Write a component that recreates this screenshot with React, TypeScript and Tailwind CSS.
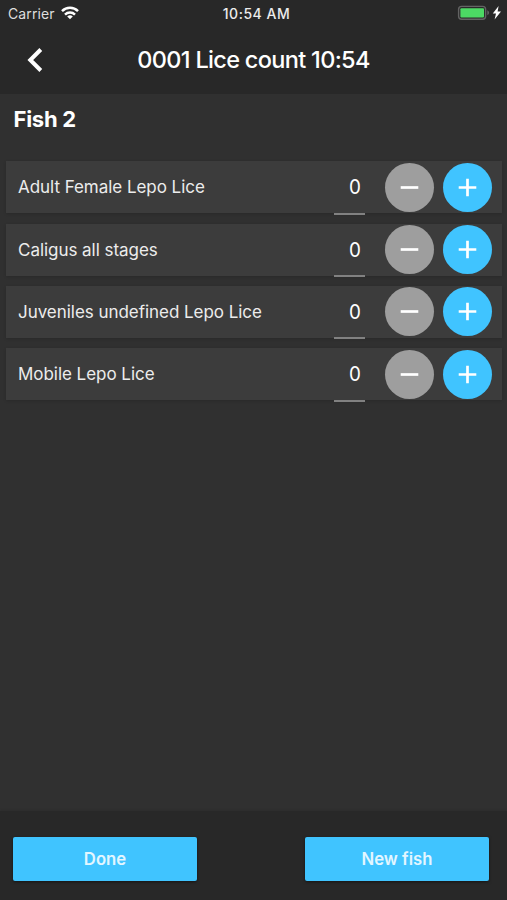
import React from "react";

const counts = [
  "Adult Female Lepo Lice",
  "Caligus all stages",
  "Juveniles undefined Lepo Lice",
  "Mobile Lepo Lice",
];

function StatusBar() {
  return (
    <div className="grid h-[27px] grid-cols-3 items-center pl-2 pr-[5px]">
      <div className="flex items-center gap-[6px]">
        <span className="text-[14px] tracking-[0.1px] text-[#dedede]">Carrier</span>
        <svg className="-mt-px" width="18" height="14" viewBox="0 0 18 14" fill="none" stroke="#fff" strokeWidth="2.5">
          <path d="M1 5.1a11.5 11.5 0 0 1 16 0" />
          <path d="M4 8.6a7.2 7.2 0 0 1 10 0" />
          <path d="M9 13.3 6.2 10.5a4 4 0 0 1 5.6 0Z" fill="#fff" stroke="none" />
        </svg>
      </div>
      <span className="whitespace-nowrap pl-[3px] text-center text-[14px] font-medium tracking-[0.5px] text-[#ececec]">10:54 AM</span>
      <div className="flex items-center justify-end">
        <svg className="-mt-px" width="46" height="16" viewBox="0 0 46 16">
          <rect x="2.6" y="1.4" width="27" height="12.8" rx="3" fill="none" stroke="#636363" strokeWidth="1.4" />
          <rect x="4.4" y="3.2" width="23.6" height="9.2" rx="1" fill="#4cd964" />
          <path d="M31.3 5.3q1.8.6 1.8 2.5t-1.8 2.5Z" fill="#636363" />
          <path d="M42.6 1 36.8 8.6h3.2L38.6 14.4 45 6.6h-3.4Z" fill="#fff" />
        </svg>
      </div>
    </div>
  );
}

function RoundButton({ plus = false }: { plus?: boolean }) {
  return (
    <button
      aria-label={plus ? "Increase" : "Decrease"}
      className={`flex size-[49px] shrink-0 items-center justify-center rounded-full ${plus ? "bg-[#40c4ff]" : "bg-[#9e9e9e]"}`}
    >
      <svg width="19" height="19" viewBox="0 0 19 19" stroke="#fff" strokeWidth="2.7">
        <path d={plus ? "M.7 9.5h17.6M9.5.7v17.6" : "M.7 9.5h17.6"} />
      </svg>
    </button>
  );
}

export default function App() {
  return (
    <div className="flex h-[900px] w-[507px] flex-col overflow-hidden bg-[#303030] font-['Inter','Liberation_Sans',sans-serif] text-white">
      <header className="h-[93.5px] shrink-0 bg-[#282828]">
        <StatusBar />
        <div className="grid h-[66px] grid-cols-[72px_1fr_72px] items-center">
          <svg className="ml-[26px]" width="18" height="26" viewBox="0 0 18 26" fill="none" stroke="#fff" strokeWidth="4">
            <path d="M14.8 2.5 4.3 13l10.5 10.5" />
          </svg>
          <h1 className="whitespace-nowrap text-center text-[23.5px] font-medium tracking-[-0.68px]">0001 Lice count 10:54</h1>
        </div>
      </header>
      <main className="flex-1 pl-1.5 pr-[5px]">
        <h2 className="ml-[7.5px] mt-[9px] h-8 text-[22px] font-bold leading-8 tracking-[-0.25px]">Fish 2</h2>
        <div className="mt-[26.7px] flex flex-col gap-[10.35px]">
          {counts.map((label) => (
            <div key={label} className="flex h-[52px] items-center bg-[#3c3c3c] pl-3 pr-[10px] shadow-[0_1px_3px_rgba(0,0,0,0.15)]">
              <span className="flex-1 whitespace-nowrap pt-[1.5px] text-[17px] tracking-[-0.04px] text-[#ececec]">{label}</span>
              <div className="mr-[19.5px] mt-[1.5px] h-[53.5px] w-[31px] shrink-0 border-b-2 border-[#818181] pr-[4px] text-right text-[20.5px] leading-[51.5px]">
                <span className="inline-block origin-right scale-x-[0.92]">0</span>
              </div>
              <div className="flex gap-[9.5px]">
                <RoundButton />
                <RoundButton plus />
              </div>
            </div>
          ))}
        </div>
      </main>
      <footer className="flex h-[89.5px] shrink-0 items-center justify-between bg-[#282828] pl-[13px] pr-[18px] pt-[7px] text-[16.7px] font-semibold text-[#e3f6ff] shadow-[0_-1px_2px_rgba(0,0,0,0.08)]">
        <button className="h-11 w-[184px] rounded-[2px] bg-[#40c4ff] pt-px shadow-[0_1px_3px_rgba(0,0,0,0.5)]">Done</button>
        <button className="h-11 w-[184px] rounded-[2px] bg-[#40c4ff] pt-px shadow-[0_1px_3px_rgba(0,0,0,0.5)]">New fish</button>
      </footer>
    </div>
  );
}
